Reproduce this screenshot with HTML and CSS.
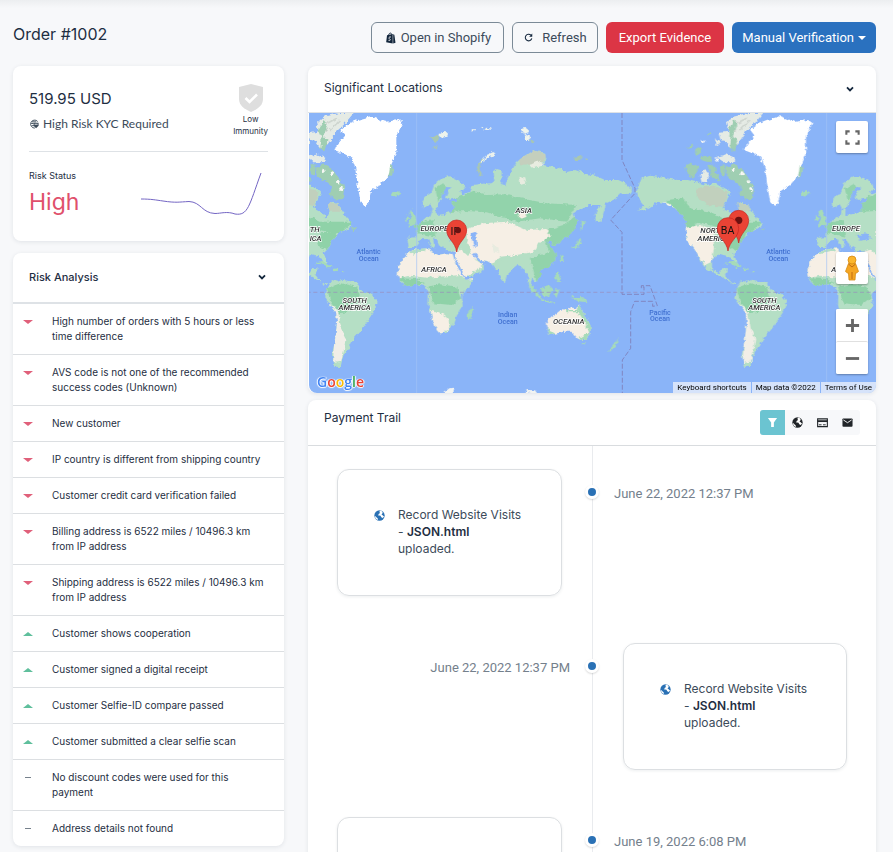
FILE: index.html
```html
<!DOCTYPE html>
<html lang="en">
<head>
<meta charset="utf-8">
<meta name="viewport" content="width=device-width, initial-scale=1">
<title>Order #1002</title>
<link rel="stylesheet" href="styles.css">
</head>
<body>
<svg class="defs" aria-hidden="true">
  <symbol id="globe" viewBox="0 0 16 16"><circle cx="8" cy="8" r="7.5" fill="currentColor"/><path class="cut" d="M8.500 .8C7 3 9.500 3.500 8 5 6 5.500 7.500 7 5.500 7.500L9.500 8.500 10.500 10.500 13 11.500 14.600 9C13 9 13 7.500 11 7 11.500 5 13 5.500 12.500 3.400L11 1.400ZM1.200 8.500 3.500 10.500 5.500 12.500 5.500 14.600C3 14 1.400 12 1.200 8.500Z"/></symbol>
  <symbol id="chevron" viewBox="0 0 10 10"><path d="m2 3.4 3 3 3-3" fill="none" stroke="currentColor" stroke-width="1.8"/></symbol>
</svg>
<div class="page">
  <header class="topbar">
    <h1>Order #1002</h1>
    <div class="actions">
      <button class="btn outline shopify" type="button"><svg class="bag" viewBox="0 0 12 14"><path d="M1.2 3.6 8 2.2V13.6L.2 12.2Z" fill="currentColor"/><path d="M8.6 2.4 10 3.2 11.4 12.8 8.6 13.5Z" fill="currentColor"/><path d="M3 4.2C3.4.8 6.2-.2 7.2 3.2" fill="none" stroke="currentColor" stroke-width="1.1"/><path d="M5.9 5.8C3.6 5 2.8 7.3 4.4 8.3 6 9.4 4.6 10.6 3 9.8" fill="none" stroke="#f7f8fa" stroke-width="1.1"/></svg>Open in Shopify</button>
      <button class="btn outline" type="button"><svg class="reload" viewBox="0 0 12 12"><path d="M10.4 7.2A4.4 4.4 0 1 1 9.2 2.9" fill="none" stroke="currentColor" stroke-width="1.4"/><path d="M11 .8V5H6.9Z" fill="currentColor"/></svg>Refresh</button>
      <button class="btn danger" type="button">Export Evidence</button>
      <button class="btn primary" type="button">Manual Verification<span class="caret"></span></button>
    </div>
  </header>
  <div class="columns">
    <aside class="side">
      <section class="card summary">
        <div class="amount-row">
          <div>
            <p class="amount">519.95 USD</p>
            <p class="kyc"><svg viewBox="0 0 12 12"><path d="M10.4 3A4.8 4.8 0 1 0 7 10.900M3.600 3.400h5M2.600 5.400h3M3.200 8h3" fill="none" stroke="currentColor" stroke-width="1.1"/><path d="M5.500 4.600h6v3.600L8.500 11 5.500 8.200Z" fill="currentColor"/><path d="M6.600 6.300h3.800" stroke="#fff"/></svg>High Risk KYC Required</p>
          </div>
          <div class="immunity"><svg viewBox="0 0 24 28"><path d="M12 0 24 3v12c0 6-5 10-12 13C5 25 0 21 0 15V3Z" fill="#dedede"/><path d="m6.500 14 4 4 7.500-7.500" fill="none" stroke="#fff" stroke-width="2.600"/></svg>Low<br>Immunity</div>
        </div>
        <div class="status-row">
          <div><p class="label">Risk Status</p><p class="high">High</p></div>
          <svg class="spark" viewBox="0 0 121 44"><path d="M0 27C10 27 15 28 22 29C35 31 38 30 48 29.500C60 30 61 41 74 41.500C80 41.500 86 39 94 42C107 44 108 34 120 1" fill="none" stroke="#7466c4" stroke-width="1"/></svg>
        </div>
      </section>
      <section class="card">
        <div class="side-head"><h2>Risk Analysis</h2><button class="icon-btn" type="button" aria-label="Collapse"><svg><use href="#chevron"/></svg></button></div>
        <ul class="risks">
          <li><i class="down"></i>High number of orders with 5 hours or less time difference</li>
          <li><i class="down"></i>AVS code is not one of the recommended success codes (Unknown)</li>
          <li><i class="down"></i>New customer</li>
          <li><i class="down"></i>IP country is different from shipping country</li>
          <li><i class="down"></i>Customer credit card verification failed</li>
          <li><i class="down"></i>Billing address is 6522 miles / 10496.3 km from IP address</li>
          <li><i class="down"></i>Shipping address is 6522 miles / 10496.3 km from IP address</li>
          <li><i class="up"></i>Customer shows cooperation</li>
          <li><i class="up"></i>Customer signed a digital receipt</li>
          <li><i class="up"></i>Customer Selfie-ID compare passed</li>
          <li><i class="up"></i>Customer submitted a clear selfie scan</li>
          <li><i class="flat"></i>No discount codes were used for this payment</li>
          <li><i class="flat"></i>Address details not found</li>
        </ul>
      </section>
    </aside>
    <main class="main">
      <section class="card">
        <div class="map-head"><h2>Significant Locations</h2><button class="icon-btn" type="button" aria-label="Collapse"><svg><use href="#chevron"/></svg></button></div>
        <div class="map">
          <svg class="world" viewBox="27 24 1701 840" preserveAspectRatio="xMidYMid slice" aria-label="World map">
            <defs>
              <filter id="coast" x="-5%" y="-5%" width="110%" height="110%"><feTurbulence type="fractalNoise" baseFrequency="0.08" numOctaves="3" seed="4"/><feDisplacementMap in="SourceGraphic" scale="14" xChannelSelector="R" yChannelSelector="G"/></filter>
              <path id="eurasia" d="M322 398 350 397 352 375 343 362 362 355 372 342 392 332 398 312 408 312 407 330 430 328 450 322 462 305 454 292 475 286 474 278 446 285 436 275 442 262 452 248 440 245 424 270 422 290 410 308 398 312 390 298 372 308 366 296 374 275 395 262 404 235 425 218 450 214 475 225 492 242 494 255 478 258 486 268 507 262 517 240 545 236 575 235 583 228 581 200 590 192 605 196 603 240 616 244 620 225 634 198 650 172 668 156 700 135 735 146 739 165 725 180 760 185 800 201 825 195 860 207 890 214 915 225 955 225 975 234 996 254 986 271 964 265 944 283 920 294 902 350 888 351 885 330 902 300 870 300 835 315 818 326 832 345 825 370 805 395 785 403 770 422 758 422 754 404 742 410 755 430 768 450 764 472 742 488 722 494 722 515 706 532 696 520 690 545 700 560 688 548 684 512 668 490 655 480 640 492 620 510 614 536 605 525 596 498 580 485 570 470 548 466 530 460 540 472 556 482 540 500 510 516 496 516 480 486 466 464 468 440 440 438 430 420 424 430 410 405 398 398 404 425 398 430 382 402 364 403 346 426 325 426Z"/>
              <path id="africa" d="M343 433 388 430 394 442 415 450 440 445 458 448 466 476 482 500 496 524 522 522 510 542 486 570 488 604 470 632 462 660 440 680 420 686 410 675 395 635 385 600 386 565 375 544 350 538 320 543 300 530 293 508 296 485 310 458 328 442Z"/>
              <path id="namerica" d="M1010 255 1025 220 1050 212 1090 218 1130 225 1160 225 1190 232 1220 240 1250 235 1278 252 1292 262 1278 290 1268 310 1292 322 1306 340 1318 320 1312 295 1325 290 1345 300 1355 318 1378 345 1386 362 1366 375 1345 385 1330 400 1315 430 1300 445 1312 474 1305 480 1290 455 1260 447 1236 464 1236 495 1258 505 1266 490 1282 490 1275 510 1292 530 1313 540 1305 540 1280 525 1250 508 1222 494 1200 465 1185 435 1168 415 1158 400 1157 375 1160 350 1145 330 1125 310 1098 297 1070 293 1040 312 1015 322 1032 300 1015 280Z"/>
              <path id="samerica" d="M1315 540 1325 525 1342 530 1355 524 1400 532 1412 555 1445 570 1462 590 1450 620 1430 650 1415 672 1390 700 1380 722 1364 745 1356 762 1351 786 1334 785 1325 750 1334 705 1340 655 1338 625 1318 600 1305 575 1310 555Z"/>
              <path id="australia" d="M740 645 770 625 785 613 805 615 810 603 830 614 838 598 855 635 872 660 870 690 855 705 835 703 815 680 790 680 750 690 742 670Z"/>
              <path id="greenland" d="M1375 55 1400 45 1440 34 1485 50 1525 45 1538 55 1518 92 1518 145 1500 185 1508 198 1492 215 1470 240 1442 258 1434 295 1425 303 1410 288 1402 240 1395 190 1384 158 1364 148 1332 135 1348 110 1364 92 1350 74Z"/>
              <clipPath id="in-eurasia"><use href="#eurasia"/></clipPath>
              <clipPath id="in-africa"><use href="#africa"/></clipPath>
              <clipPath id="in-na"><use href="#namerica"/></clipPath>
              <clipPath id="in-sa"><use href="#samerica"/></clipPath>
              <clipPath id="in-au"><use href="#australia"/></clipPath>
              <g id="old-world">
                <g fill="#b5dfc5"><use href="#eurasia"/><use href="#africa"/></g>
                <g clip-path="url(#in-eurasia)">
                  <path fill="#92d3ab" d="M455 285 520 258 565 270 610 268 660 280 740 295 830 300 800 350 720 340 650 350 560 322 500 318 430 322Z M322 360 400 345 410 395 330 380Z M722 380 790 360 830 330 835 400 780 500 710 530 690 460 750 440Z M405 250 430 235 440 250 415 290Z"/>
                  <path fill="#f6efe5" d="M500 372 550 355 620 350 680 375 740 372 752 395 720 410 700 440 650 450 600 455 570 480 520 460 550 480 480 530 460 440 500 430Z M655 325 675 318 680 335 662 342Z"/>
                  <path fill="#c4cfbd" d="M655 165 700 135 740 150 730 170 700 180 660 178Z"/>
                  <path fill="#e8ece0" d="M690 180 720 165 730 180 700 190Z M575 415 590 425 600 445 585 440Z M655 215 675 220 680 235 660 240Z"/>
                  <path fill="#b5dfc5" d="M580 480 605 465 640 480 620 530Z M500 400 512 440 500 450 480 430Z"/>
                </g>
                <g clip-path="url(#in-africa)">
                  <path fill="#f6efe5" d="M285 430H525V525L492 522 480 510 440 514 380 518 330 512 290 522Z M392 615 420 622 442 640 448 668 420 690 400 680Z"/>
                  <path fill="#8fd2a8" d="M385 545 420 538 470 545 485 575 455 600 400 595Z M296 520 350 522 375 535 320 545Z"/>
                  <path fill="#b5dfc5" d="M325 438 380 425 375 438 330 448Z"/>
                </g>
                <g fill="#8ab4f8"><path d="M512 385 528 380 532 425 520 424Z M442 390 470 385 485 400 450 408Z"/><path d="M466 462 482 498 494 516" fill="none" stroke="#8ab4f8" stroke-width="5"/><path d="M520 445 536 462" stroke="#8ab4f8" stroke-width="6"/></g>
                <g fill="#a6dbb8">
                  <path d="M328 365 350 356 348 338 336 312 326 320 334 338 328 350Z M316 348 328 342 324 330 315 338Z M275 264 292 258 302 265 288 275 276 272Z M500 630 516 606 522 615 508 649Z M686 532 700 545 722 575 732 584 718 580 690 552Z M724 583 765 592 764 596 724 588Z M722 550 748 544 758 554 748 575 728 572Z M765 553 778 554 770 576 764 568Z M812 575 850 577 862 592 832 588Z M765 502 775 500 783 530 775 532 766 518Z M950 712 954 702 950 722Z M925 738 945 715 955 698 950 720 928 742Z M846 715 858 714 852 722Z M778 460 785 448 792 468 780 468Z M810 430 832 428 844 410 842 398 832 408 826 424Z M844 380 845 348 860 350 850 360Z"/>
                </g>
                <g fill="#eef3ec"><path d="M415 87 440 80 443 95 425 98Z M664 68 680 66 685 82 672 88Z M672 88 690 94 690 105 677 105Z M515 73 525 72V79H515Z M540 70 547 68 550 75Z M558 68 574 70 570 75 554 75Z"/></g>
                <g fill="#a9c8b0"><path d="M390 95 420 92 412 112 400 105Z M400 128 412 120 410 134Z M530 188 545 160 552 165 538 190 548 212 538 214Z M818 155 845 154 842 164 824 166Z M855 160 865 162 858 168Z M690 102 708 112 695 115Z"/></g>
                <path fill="#eef3ec" d="M540 172 560 150 582 140 582 150 555 162 545 178Z"/>
                <path fill="#f2f4f2" d="M675 862 685 855 705 856 712 866Z"/>
                <use href="#australia" fill="#f6efe5"/>
                <g clip-path="url(#in-au)" fill="#a6dbb8"><path d="M785 605 812 618 830 618 840 600 880 660 870 710 830 705 868 680 850 645 835 622 800 622Z M735 670 750 675 770 690H735Z"/></g>
              </g>
              <g id="new-world">
                <g fill="#b5dfc5"><use href="#namerica"/><use href="#samerica"/></g>
                <g clip-path="url(#in-na)">
                  <path fill="#8fd2a8" d="M1100 285 1150 280 1170 310 1230 320 1290 350 1330 350 1390 350 1350 385 1300 380 1230 360 1190 350 1170 385 1145 340Z M1290 385 1340 380 1315 440 1280 420Z"/>
                  <path fill="#c1d0bd" d="M1190 250 1240 242 1285 262 1270 305 1220 300 1190 275Z M1310 290 1350 300 1350 320 1310 320Z"/>
                  <path fill="#f6efe5" d="M1155 370 1200 360 1240 380 1242 430 1235 470 1215 480 1185 440 1160 410Z"/>
                  <path fill="#f4f5ef" d="M1085 295 1110 296 1130 316 1100 304Z"/>
                </g>
                <g clip-path="url(#in-sa)">
                  <path fill="#8fd2a8" d="M1310 550 1350 535 1400 545 1410 580 1380 620 1345 625 1320 590Z"/>
                  <path fill="#f1eee7" d="M1310 592 1344 620 1352 670 1366 700 1360 740 1352 770 1328 775 1332 690 1336 635Z"/>
                </g>
                <path fill="#a6dbb8" d="M1272 476 1300 470 1325 485 1312 487 1295 478Z M1328 492 1345 490 1346 497 1330 499Z M1355 497 1363 497V502H1355Z"/>
                <use href="#greenland" fill="#fff"/>
                <g fill="#e5ebe5">
                  <path d="M1278 55 1300 35 1345 24 1390 24 1362 58 1340 78 1325 100 1312 118 1290 130 1276 108 1262 105 1255 84 1285 80Z"/>
                  <path d="M1250 155 1280 148 1305 158 1300 172 1270 172Z M1200 210 1215 192 1228 212 1220 232 1205 230Z M1245 100 1262 112 1250 122Z"/>
                </g>
                <path d="M1300 60 1340 40M1320 75 1350 45M1290 85 1310 75" stroke="#cfd6d0" stroke-width="5"/>
                <g fill="#9fceb2">
                  <path d="M1300 45 1312 60 1298 95 1312 104 1302 140 1290 130 1294 98 1284 74Z M1155 185 1170 172 1198 188 1180 218 1162 205Z M1185 135 1205 125 1202 145 1186 150Z M1202 155 1235 158 1230 172 1205 166Z M1258 182 1275 178 1274 212 1262 208Z M1275 190 1300 178 1330 195 1345 220 1362 245 1358 282 1340 284 1318 268 1325 245 1300 225 1280 215Z M1222 180 1245 178 1248 200 1262 228 1236 218Z M1160 128 1180 118 1178 126Z M1218 92 1232 80 1234 90Z M1500 180 1510 182 1506 210 1494 220Z M1380 370 1398 370 1390 378Z"/>
                </g>
                <g fill="#f7f8f5"><circle cx="1300" cy="196" r="5"/><circle cx="1325" cy="205" r="6"/><circle cx="1345" cy="230" r="5"/><circle cx="1353" cy="252" r="6"/><circle cx="1210" cy="108" r="5"/><circle cx="1250" cy="165" r="5"/></g>
              </g>
            </defs>
            <rect x="-400" y="-200" width="2600" height="1300" fill="#8ab4f8"/>
            <g filter="url(#coast)">
              <use href="#old-world"/><use href="#old-world" x="1229"/>
              <use href="#new-world"/><use href="#new-world" x="-1229"/>
              <path fill="#f2f4f2" d="M430 864 448 850 462 848 455 868Z"/>
            </g>
            <g stroke="#a2c2f6" stroke-width="2"><path d="M350 24V870M1580 24V870"/></g>
            <path d="M20 562H1740" class="border-line" stroke-dasharray="12 8"/>
            <path class="border-line dark" stroke-dasharray="15 6" d="M966 24V165L1005 250V265L932 345 966 382V568H1032V545L1024 550V542H1050L1072 602 1058 604V589H1004L992 620V730L967 765V870"/>
            <g class="place">
              <text x="403" y="378">EUROPE</text><text class="edge" x="29" y="382">TH</text><text class="edge" x="29" y="407">ICA</text><text x="402" y="502">AFRICA</text><text x="671" y="325">ASIA</text><text x="806" y="658">OCEANIA</text><text x="164" y="594">SOUTH</text><text x="164" y="616">AMERICA</text><text x="1393" y="594">SOUTH</text><text x="1393" y="616">AMERICA</text><text x="1238" y="385">NORTH</text><text x="1241" y="409">AMERICA</text><text x="1638" y="378">EUROPE</text><text x="1632" y="502">AFRICA</text>
            </g>
            <g class="ocean"><text x="206" y="448">Atlantic</text><text x="206" y="468">Ocean</text><text x="1435" y="448">Atlantic</text><text x="1435" y="468">Ocean</text><text x="623" y="637">Indian</text><text x="623" y="656">Ocean</text><text x="1080" y="629">Pacific</text><text x="1080" y="648">Ocean</text></g>
            <g class="pins">
              <path d="M470 441C466 410 440 402 440 375A30 30 0 0 1 500 375C500 402 474 410 470 441Z"/><text x="466" y="390">IP</text><circle cx="474" cy="376" r="9"/>
              <path d="M1316 414C1312 384 1286 374 1286 346A30 30 0 0 1 1346 346C1346 374 1320 384 1316 414Z"/><circle cx="1316" cy="346" r="11"/>
              <path d="M1284 438C1280 408 1252 398 1252 370A32 32 0 0 1 1316 370C1316 398 1288 408 1284 438Z"/><text x="1283" y="386">BA</text>
            </g>
          </svg>
          <span class="google" aria-label="Google"><b>G</b><b>o</b><b>o</b><b>g</b><b>l</b><b>e</b></span>
          <div class="controls">
            <button type="button" class="ctl" aria-label="Fullscreen"><svg viewBox="0 0 18 18"><path d="M2.500 6V2.500H6M12 2.500h3.500V6M15.500 12v3.500H12M6 15.500H2.500V12" fill="none" stroke="#666" stroke-width="2.200"/></svg></button>
            <button type="button" class="ctl person" aria-label="Street View"><svg viewBox="0 0 16 26"><path d="M4.500 8.500h7l3 8-2 1.500-1 0-.5 7H5l-.5-7-1 0L1.500 16.500Z" fill="#f5a623" stroke="#d58a12" stroke-width=".8"/><circle cx="8" cy="5" r="4" fill="#fbb62c" stroke="#d58a12" stroke-width=".8"/><path d="M4.500 9 8 12l3.500-3M8 17v7" fill="none" stroke="#c06a10"/></svg></button>
            <div class="zoom"><button type="button" class="ctl" aria-label="Zoom in"><svg viewBox="0 0 18 18"><path d="M9 2v14M2 9h14" stroke="#666" stroke-width="3"/></svg></button><button type="button" class="ctl" aria-label="Zoom out"><svg viewBox="0 0 18 18"><path d="M2 9h14" stroke="#666" stroke-width="3"/></svg></button></div>
          </div>
          <div class="credits"><a href="#">Keyboard shortcuts</a><span>Map data ©2022</span><a href="#">Terms of Use</a></div>
        </div>
      </section>
      <section class="card trail">
        <div class="trail-head"><h2>Payment Trail</h2>
          <div class="filters">
            <button type="button" class="on" aria-label="All"><svg viewBox="0 0 12 12"><path d="M1 1h10L7.500 6v5h-3V6Z" fill="#fff"/></svg></button>
            <button type="button" aria-label="Web"><svg><use href="#globe"/></svg></button>
            <button type="button" aria-label="Payments"><svg viewBox="0 0 12 12"><path d="M.7 2h10.600v8.500H.7Z" fill="none" stroke="#212529" stroke-width="1.200"/><path d="M.5 4.500h11" stroke="#212529" stroke-width="2"/><path d="M2 8.500h3M6.500 8.500h3" stroke="#212529"/></svg></button>
            <button type="button" aria-label="Mail"><svg viewBox="0 0 12 12"><rect x=".5" y="1.500" width="11" height="9" rx="1" fill="#212529"/><path d="m1.500 3.200 4.500 3 4.500-3" fill="none" stroke="#fff"/></svg></button>
          </div>
        </div>
        <ol class="timeline">
          <li><article class="event"><svg><use href="#globe"/></svg><p>Record Website Visits - <strong>JSON.html</strong> uploaded.</p></article><time>June 22, 2022 12:37 PM</time></li>
          <li><article class="event"><svg><use href="#globe"/></svg><p>Record Website Visits - <strong>JSON.html</strong> uploaded.</p></article><time>June 22, 2022 12:37 PM</time></li>
          <li><article class="event"></article><time>June 19, 2022 6:08 PM</time></li>
        </ol>
      </section>
    </main>
  </div>
</div>
</body>
</html>
```
FILE: styles.css
```css
*, *::before { box-sizing: border-box; }
body { margin: 0; height: 100vh; overflow: hidden; background: linear-gradient(#eceef0, #f7f8fa 8px); color: #1e2e42; font-family: Inter, "Open Sans", sans-serif; }
h1, h2, p, ul, ol { margin: 0; padding: 0; font-weight: 400; }
button { font: inherit; color: inherit; border: 0; background: none; padding: 0; }
svg { display: block; flex: none; }
.defs { position: absolute; width: 0; height: 0; }
.page { height: 100vh; overflow: hidden; padding: 22px 17px 0 13px; }
.topbar { display: flex; justify-content: space-between; align-items: flex-start; height: 44px; }
h1 { font-size: 16px; line-height: 24px; }
.actions { display: flex; gap: 8px; }
.btn { display: flex; align-items: center; height: 31px; padding: 0 10px; border-radius: 6px; font-family: Roboto, sans-serif; font-size: 13px; white-space: nowrap; }
.outline { border: 1px solid #7b8a97; color: #3c4b5a; }
.shopify { padding: 0 12px; }
.danger { padding: 0 13px; background: #dc3545; color: #fff; }
.primary { background: #2a71bf; color: #fff; }
.bag { width: 10px; height: 12px; margin: 0 5px 0 2px; color: #13263c; }
.reload { width: 9px; height: 9px; margin: 0 9px 0 1px; color: #13263c; }
.caret { margin-left: 4px; border: 4px solid transparent; border-top-color: #fff; border-bottom: 0; }
.columns { display: grid; grid-template-columns: minmax(0, 271fr) minmax(0, 568fr); gap: 24px; align-items: start; }
.card { background: #fff; border-radius: 8px; box-shadow: 0 1px 4px rgba(30, 46, 66, .1); }
.side { display: flex; flex-direction: column; gap: 12px; }
.summary { padding: 18px 16px 16px; height: 175px; }
.amount-row { display: flex; justify-content: space-between; height: 68px; border-bottom: 1px solid #dee2e6; }
.amount { margin-top: 3px; font-size: 15px; line-height: 24px; }
.kyc { display: flex; align-items: center; gap: 4px; margin-top: 3px; font-family: Lato, sans-serif; font-size: 12px; line-height: 20px; color: #3c4b5a; }
.kyc svg { width: 10px; height: 10px; }
.immunity { font-size: 8px; line-height: 12px; text-align: center; }
.immunity svg { width: 24px; height: 28px; margin: 0 auto 1px; }
.status-row { display: flex; justify-content: space-between; padding-top: 16px; }
.label { font-size: 9px; line-height: 16px; }
.high { font-size: 23px; line-height: 36px; color: #e0506c; }
.spark { width: 121px; height: 44px; margin: 4px 6px 0 0; }
h2 { font-size: 12px; line-height: 16px; }
.icon-btn svg { width: 10px; height: 10px; color: #13263c; }
.side-head { display: flex; justify-content: space-between; align-items: center; height: 51px; padding: 0 17px 2px 16px; border-bottom: 2px solid #dee2e6; }
.side-head h2 { font-weight: 500; font-size: 11px; }
.risks { list-style: none; font-size: 10px; line-height: 15px; }
.risks li { position: relative; padding: 10px 16px 10px 39px; border-bottom: 1px solid #dcdfe2; }
.risks li:last-child { border-bottom: 0; }
.risks i { position: absolute; left: 10px; top: 16px; border: 5px solid transparent; }
.risks .down { border-top: 4px solid #e0607a; border-bottom: 0; }
.risks .up { border-bottom: 4px solid #5fbf9c; border-top: 0; }
.risks .flat { border: 0; width: 6px; height: 1px; left: 12px; top: 17px; background: #76818c; }
.main { display: flex; flex-direction: column; gap: 7px; }
.map-head { display: flex; justify-content: space-between; height: 47px; padding: 14px 21px 0 16px; border-bottom: 1px solid #dee2e6; }
.map-head .icon-btn { height: 18px; }
.map { position: relative; height: 280px; margin-left: 1px; overflow: hidden; border-radius: 0 0 8px 8px; }
.world { width: 100%; height: 100%; }
.border-line { fill: none; stroke: #9a8dbb; stroke-width: 2; }
.dark { stroke: #7c6fa6; }
.place { font: italic 500 23px Roboto, sans-serif; text-anchor: middle; fill: #333; stroke: #fff; stroke-width: 4px; paint-order: stroke; }
.place .edge { text-anchor: start; }
.ocean { font: 500 21px Roboto, sans-serif; text-anchor: middle; fill: #3f6fd0; }
.pins path { fill: #ea4335; stroke: #c5221f; stroke-width: 2; }
.pins circle { fill: #6b1111; }
.pins text { font: 32px Roboto, sans-serif; text-anchor: middle; fill: #111; }
.google { position: absolute; left: 8px; bottom: 1px; font: 14px/20px "Open Sans", sans-serif; text-shadow: 0 0 1px #fff, 1px 0 1px #fff, -1px 0 1px #fff, 0 1px 1px #fff; }
.google b { font-weight: 600; color: #4285f4; }
.google b:nth-child(2), .google b:nth-child(6) { color: #ea4335; }
.google b:nth-child(3) { color: #fbbc05; }
.google b:nth-child(5) { color: #34a853; }
.controls { position: absolute; top: 8px; right: 8px; display: flex; flex-direction: column; }
.ctl { display: grid; place-items: center; width: 32px; height: 32px; background: #fff; border-radius: 2px; box-shadow: 0 1px 2px rgba(0, 0, 0, .3); }
.ctl svg { width: 17px; height: 17px; }
.person { margin: 99px 0 25px; }
.person svg { width: 16px; height: 26px; }
.zoom { background: #fff; box-shadow: 0 1px 2px rgba(0, 0, 0, .3); border-radius: 2px; }
.zoom .ctl { box-shadow: none; }
.zoom .ctl + .ctl { border-top: 1px solid #e0e0e0; height: 33px; }
.credits { position: absolute; right: 0; bottom: 0; display: flex; font: 8px/11px Roboto, sans-serif; background: rgba(232, 239, 250, .8); color: #000; }
.credits > * { padding: 0 4px; color: inherit; text-decoration: none; }
.credits > * + * { border-left: 1px solid #8ab4f8; }
.trail { min-height: 452px; border-radius: 8px 8px 0 0; }
.trail-head { display: flex; justify-content: space-between; height: 46px; padding: 10px 16px 0 16px; border-bottom: 1px solid #d9dcdf; }
.filters { display: flex; height: 25px; background: #f7f8fa; border-radius: 3px; }
.filters button { display: grid; place-items: center; width: 25px; color: #212529; }
.filters .on { background: #6bc4d1; border-radius: 3px 0 0 3px; }
.filters svg { width: 11px; height: 11px; }
.cut { fill: #fff; }
.timeline { list-style: none; display: grid; gap: 47px; padding: 23px 0 0; background: linear-gradient(#e9ebee, #e9ebee) 50% 0 / 1px 100% no-repeat; }
.timeline li { position: relative; display: grid; grid-template-columns: minmax(0, 1fr) minmax(0, 1fr); }
.timeline li::before { content: ""; position: absolute; left: 50%; top: 16px; width: 14px; height: 14px; margin-left: -7px; border: 3px solid #fff; border-radius: 50%; background: #2a71b5; box-shadow: 0 1px 2px rgba(0, 0, 0, .15); }
.event { display: flex; gap: 13px; height: 127px; margin: 0 30px 0 29px; padding: 36px 36px 0; border: 1px solid #dcdfe2; border-radius: 12px; box-shadow: 0 1px 3px rgba(30, 46, 66, .08); font-size: 12px; line-height: 17px; color: #3c4b5a; }
.event svg { width: 11px; height: 11px; margin-top: 4px; color: #2a71b5; }
.event strong { font-weight: 600; color: #1e2e42; }
time { padding: 15px 22px 0; font-family: Roboto, sans-serif; font-size: 13px; line-height: 20px; color: #74808c; }
.timeline li:nth-child(even) .event { order: 2; margin: 0 29px 0 31px; }
.timeline li:nth-child(even) time { text-align: right; }
```
